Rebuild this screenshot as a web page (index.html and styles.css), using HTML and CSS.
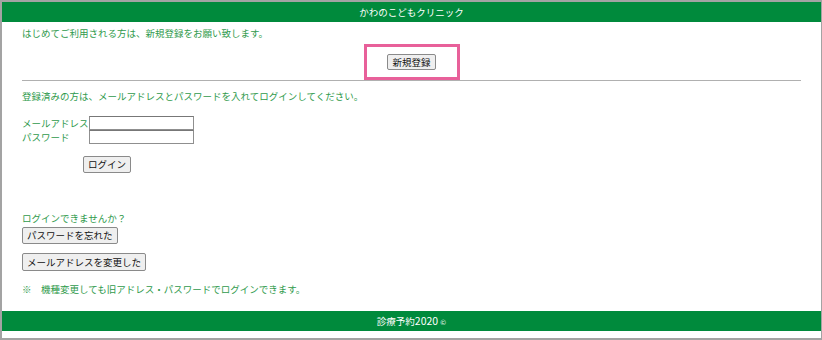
FILE: index.html
```html
<!DOCTYPE html>
<html lang="ja">
<head>
    <meta charset="UTF-8">
    <title>かわのこどもクリニック</title>
    <link rel="stylesheet" href="styles.css">
</head>
<body>
    <div class="marco">
        <header class="cabecera">かわのこどもクリニック</header>
        <div class="contenido">
            <p class="texto primero">はじめてご利用される方は、新規登録をお願い致します。</p>
            <div class="registro">
                <div class="resaltado">
                    <button type="button" class="boton">新規登録</button>
                </div>
            </div>
            <hr class="linea">
            <p class="texto segundo">登録済みの方は、メールアドレスとパスワードを入れてログインしてください。</p>

            <form class="login">
                <label class="etiqueta" for="mail">メールアドレス</label>
                <input class="campo" id="mail" type="text">
                <label class="etiqueta" for="pass">パスワード</label>
                <input class="campo" id="pass" type="password">
            </form>
            <button type="button" class="boton entrar">ログイン</button>

            <p class="texto ayuda">ログインできませんか？</p>
            <button type="button" class="boton olvido">パスワードを忘れた</button>
            <button type="button" class="boton cambio">メールアドレスを変更した</button>
            <p class="texto aviso">※　機種変更しても旧アドレス・パスワードでログインできます。</p>
        </div>
        <footer class="pie">診療予約<span class="anio">2020</span> <span class="copy">©</span></footer>
    </div>
</body>
</html>
```

FILE: styles.css
```css
html, body {
    margin: 0;
    padding: 0;
    background: #fff;
}
body {
    font-family: "Noto Sans CJK JP", "Noto Sans", sans-serif;
    font-size: 9.5px;
}
.marco {
    width: 822px;
    height: 340px;
    box-sizing: border-box;
    border: 2px solid #a3a3a3;
    border-right-width: 1px;
    display: flex;
    flex-direction: column;
}
.cabecera,
.pie {
    background: #008a3c;
    color: #fff;
    text-align: center;
    height: 20px;
    line-height: 20px;
}
.contenido {
    padding: 4px 20px 0 20px;
    display: flex;
    flex-direction: column;
    align-items: flex-start;
}
.texto {
    margin: 0;
    color: #2f9a4c;
    line-height: 14px;
}
.registro {
    align-self: stretch;
    display: flex;
    justify-content: center;
    margin-top: 4px;
}
.resaltado {
    width: 90px;
    height: 30px;
    border: 3px solid #e8609a;
    display: flex;
    align-items: center;
    justify-content: center;
}
.linea {
    align-self: stretch;
    margin: 0;
    border: 0;
    border-top: 1px solid #b0b0b0;
}
.segundo {
    margin-top: 8px;
}
.boton {
    font-family: inherit;
    font-size: 9.5px;
    color: #111;
    background: #efefef;
    border: 1px solid #8a8a8a;
    border-radius: 2px;
    padding: 0 4px;
    height: 17px;
    line-height: 15px;
}
.resaltado .boton {
    height: 16px;
    line-height: 14px;
}
.login {
    margin-top: 13px;
    display: grid;
    grid-template-columns: 67px 105px;
    grid-auto-rows: 14px;
}
.etiqueta {
    color: #2f9a4c;
    line-height: 14px;
}
.campo {
    box-sizing: border-box;
    width: 105px;
    height: 14px;
    margin: 0;
    padding: 0 2px;
    border: 1px solid #8f8f8f;
    border-top-color: #777;
    font-size: 9.5px;
}
.entrar {
    margin-top: 12px;
    margin-left: 61px;
}
.ayuda {
    margin-top: 38px;
}
.olvido {
    margin-top: 2px;
}
.cambio {
    margin-top: 9px;
    height: 18px;
    line-height: 16px;
}
.aviso {
    margin-top: 11px;
}
.pie {
    margin-top: 15px;
}
.anio {
    font-size: 10.5px;
}
.copy {
    font-size: 7px;
}
```
